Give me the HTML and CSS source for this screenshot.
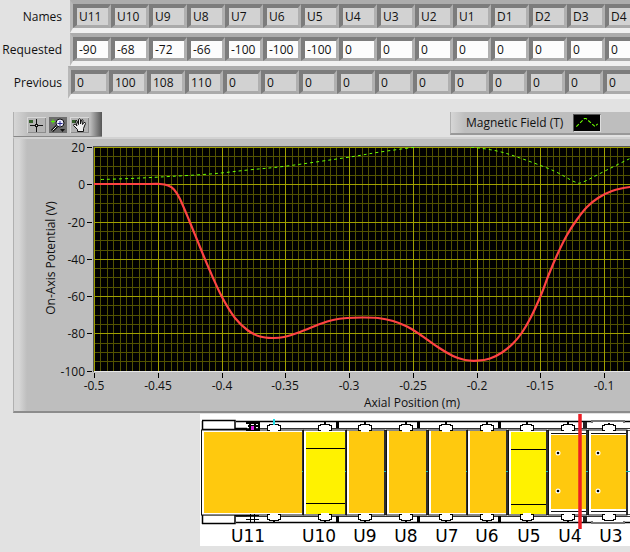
FILE: index.html
```html
<!DOCTYPE html>
<html lang="en">
<head>
<meta charset="utf-8">
<title>Electrode Potentials</title>
<link rel="stylesheet" href="styles.css">
</head>
<body>
<main class="panel">
  <section class="arrays">
    <div class="array"><label class="array-label" for="names-0">Names</label><div class="cells" id="names"></div></div>
    <div class="array"><label class="array-label" for="requested-0">Requested</label><div class="cells editable" id="requested"></div></div>
    <div class="array indicator"><label class="array-label" for="previous-0">Previous</label><div class="cells" id="previous"></div></div>
  </section>

  <section class="graph">
    <header class="graph-head">
      <div class="palette">
        <button class="tool" type="button" aria-label="Cursor">
          <svg width="19" height="16" shape-rendering="crispEdges"><path d="M2 3h4v3H2z" fill="#355f2b"/><path d="M3 8.500h13M9.500 2v13" stroke="#111"/><path d="M8 7h3v3H8z" fill="#111"/><path d="M9 8h1v1H9z" fill="#ddd"/></svg>
        </button>
        <button class="tool pressed" type="button" aria-label="Zoom">
          <svg width="18" height="16"><path d="M2 4.500h4M4 2.500v4" stroke="#55f000"/><path d="M8 9l-5 5" stroke="#111" stroke-width="3"/><path d="M7.500 9.500l-4 4" stroke="#eee"/><circle cx="11" cy="6" r="4" fill="#eef" stroke="#111"/><path d="M8.500 6.500h5M11 4v5" stroke="#24248c"/><path d="M11 12h5l-2.500 3z" fill="#111"/></svg>
        </button>
        <button class="tool" type="button" aria-label="Pan">
          <svg width="19" height="16"><path d="M2 3h4v3H2z" fill="#355f2b"/><path d="M7.500 14.500v-2L3.500 8.500q0-2 2-1l1.500 1.500L5.500 4q.5-1.500 1.500 0l1.500 3.500V2.500q1-1.500 2 0v4.500l1-4q1.500-1 1.500.5L12.500 7.500l1.500-2q1.500-.5 1.500 1l-2 5v3z" fill="#eee" stroke="#111"/></svg>
        </button>
      </div>
      <div class="legend">
        <span>Magnetic Field (T)</span>
        <svg class="swatch" width="28" height="18" viewBox="0 0 28 18"><path d="M2 13L11 4h2L23 13l3-3" fill="none" stroke="#6cff00" stroke-width="1.200" stroke-dasharray="4 2"/></svg>
      </div>
    </header>
    <div class="graph-body">
      <svg class="chart" width="640" height="272" viewBox="14 139 640 272" role="img" aria-label="On-axis potential and magnetic field against axial position">
        <defs><clipPath id="plot-area"><rect x="94" y="147" width="560" height="224"/></clipPath></defs>
        <rect x="93" y="146" width="561" height="226" fill="#555"/>
        <rect x="94" y="371" width="560" height="1" fill="#e8e8e8"/>
        <rect x="94" y="147" width="560" height="224"/>
        <g id="grid" clip-path="url(#plot-area)" shape-rendering="crispEdges"></g>
        <g clip-path="url(#plot-area)" fill="none">
          <path id="field" class="field"/>
          <path id="potential" class="potential"/>
        </g>
        <g id="ticks"></g>
        <text x="412" y="407" text-anchor="middle">Axial Position (m)</text>
        <text transform="translate(55 258) rotate(-90)" text-anchor="middle">On-Axis Potential (V)</text>
      </svg>
    </div>
  </section>

  <figure class="diagram">
    <svg width="430" height="132" viewBox="200 414 430 132" role="img" aria-label="Electrode stack cross-section">
      <g stroke="#000" fill="none">
        <path d="M236 421.500H630M236 522.500H630" stroke-width="1.500"/>
        <path d="M236 428.500H630M236 516.500H630" stroke="#333"/>
        <path d="M202 430.500H630M202 514.500H630" stroke="#555"/>
        <path d="M202.500 421v103M202 420.500h33v8h12M202 523.500h33v-8h12M202 429.500h45M202 514.500h45" stroke-width="1.500"/>
      </g>
      <g id="electrodes"></g>
      <g id="supports" shape-rendering="crispEdges"></g>
      <g>
        <path d="M246 423h14M248 426h10M246 430h13M250 421v10M255 421v10M259 423v8" stroke="#000" stroke-width="2"/>
        <path d="M251 426h3v4h-3z" fill="#e020e0"/>
        <path d="M246 515.500h13M246 519.500h13M250.500 514v9M254.500 514v9" stroke="#000" fill="none"/>
        <path d="M274 419v6" stroke="#20dce8" stroke-width="2"/>
        <path d="M592 423v-2h32v2M592 521v2h32v-2" stroke="#777" fill="#fff" stroke-width="2"/>
        <path d="M583 422h4v6h-4zM583 516h4v6h-4z" fill="#222"/>
      </g>
      <path d="M580 414v115" stroke="#ed1c24" stroke-width="3.500"/>
      <g class="names" id="electrode-names"></g>
    </svg>
  </figure>
</main>
<script src="panel.js"></script>
</body>
</html>
```
FILE: styles.css
```css
* { box-sizing: border-box; }

body {
  margin: 0;
  background: #e2e2e2;
  color: #111;
  font: 12px/16px "Open Sans", "Noto Sans", sans-serif;
  overflow: hidden;
}

.array {
  display: flex;
  align-items: center;
  gap: 8px;
  white-space: nowrap;
}

.array.indicator { gap: 6px; }

.array-label {
  flex: none;
  width: 62px;
  text-align: right;
}

.cells {
  display: flex;
  flex: none;
  border-style: solid;
  border-width: 4px 3px 5px;
  border-color: #acacac #f0f0f0 #f0f0f0 #b8b8b8;
  background: #b2b2b2;
}

.cell {
  width: 38px;
  height: 24px;
  padding: 0 2px;
  border-style: solid;
  border-width: 4px 3px 3px 4px;
  border-color: #7c7c7c #b0b0b0 #aaa #7c7c7c;
  border-radius: 0;
  background: #d2d2d2;
  color: #111;
  font: inherit;
  outline: 0;
}

.editable .cell { background: #fcfcfc; }

.graph { margin: 13px 0 0 13px; }

.graph-head {
  display: flex;
  align-items: flex-start;
  justify-content: space-between;
}

.palette {
  display: flex;
  align-items: flex-start;
  gap: 3px;
  height: 25px;
  padding: 5px 13px 0;
  border-left: 1px solid #b0b0b0;
  border-bottom: 1px solid #888;
  background: linear-gradient(90deg, #d6d6d6, #bebebe 14px, #bebebe 76px, #555);
}

.tool {
  width: 19px;
  height: 16px;
  padding: 0;
  border: 0;
  background: #b4b4b4;
  box-shadow: inset 1px 1px #d8d8d8, inset -1px -1px #8c8c8c;
}

.tool.pressed {
  width: 18px;
  background: #6e6e6e;
  box-shadow: none;
}

.tool svg { display: block; }

.legend {
  display: flex;
  align-items: center;
  gap: 10px;
  width: 180px;
  height: 23px;
  padding-left: 15px;
  border-left: 1px solid #b0b0b0;
  border-bottom: 2px solid #999;
  background: linear-gradient(90deg, #d6d6d6, #bebebe 14px);
  white-space: nowrap;
}

.swatch {
  border: 1px solid #ddd;
  border-top-color: #555;
  border-left-color: #555;
  background: #000;
}

.graph-body {
  overflow: hidden;
  border-top: 2px solid #d2d2d2;
  border-left: 1px solid #b0b0b0;
  border-bottom: 2px solid #8c8c8c;
  background: linear-gradient(90deg, #d6d6d6 5px, #bebebe 13px);
}

.chart { display: block; }
.chart text { fill: #111; }
.field { stroke: #6cff00; stroke-dasharray: 3 3; }
.potential { stroke: #ff4343; stroke-width: 2.2; }

.diagram {
  margin: 1px 0 0 200px;
  overflow: hidden;
  background: #fff;
}

.diagram svg { display: block; }
.names { font: 17px "DejaVu Sans", sans-serif; }
```
FILE: panel.js
```js
const names = ["U11", "U10", "U9", "U8", "U7", "U6", "U5", "U4", "U3", "U2", "U1", "D1", "D2", "D3", "D4"];
const requested = [-90, -68, -72, -66, -100, -100, -100, 0, 0, 0, 0, 0, 0, 0, 0];
const previous = [0, 100, 108, 110, 0, 0, 0, 0, 0, 0, 0, 0, 0, 0, 0];

const el = id => document.getElementById(id);

function fillCells(id, values, editable) {
  el(id).innerHTML = values.map((v, i) =>
    `<input class="cell" id="${id}-${i}" aria-label="${id} ${names[i]}" value="${v}"${editable ? "" : " readonly"}>`).join("");
}
fillCells("names", names, false);
fillCells("requested", requested, true);
fillCells("previous", previous, false);

// Axes: 50 mm per major division across, 20 V down.
let grid = "", major = "", ticks = "";
for (let i = 0; i <= 88; i++) {
  const x = Math.floor(94.5 + i * 6.375);
  const line = `<rect x="${x}" y="147" width="1" height="224" fill="${i % 10 ? "#525200" : "#a0a000"}"/>`;
  if (i % 10) grid += line; else {
    major += line;
    const label = String(+(-0.5 + i * 0.005).toFixed(2));
    ticks += `<rect x="${x}" y="373" width="1" height="5"/><text x="${x}" y="390" text-anchor="middle">${label}</text>`;
  }
}
for (let i = 0; i <= 24; i++) {
  const y = Math.round(147 + i * 9.32);
  const line = `<rect x="94" y="${y}" width="560" height="1" fill="${i % 4 ? "#525200" : "#a0a000"}"/>`;
  if (i % 4) grid += line; else {
    major += line;
    ticks += `<rect x="87" y="${y}" width="5" height="1"/><text x="85" y="${y + 5}" text-anchor="end">${20 - i * 5}</text>`;
  }
}
el("grid").innerHTML = grid + major;
el("ticks").innerHTML = ticks;

// Catmull-Rom spline through the sample points.
function spline(p) {
  let d = `M${p[0]}`;
  for (let i = 0; i < p.length - 1; i++) {
    const a = p[i - 1] || p[i], b = p[i], c = p[i + 1], e = p[i + 2] || c;
    d += `C${b[0] + (c[0] - a[0]) / 6},${b[1] + (c[1] - a[1]) / 6} ${c[0] - (e[0] - b[0]) / 6},${c[1] - (e[1] - b[1]) / 6} ${c}`;
  }
  return d;
}
el("potential").setAttribute("d", spline([[94, 184], [120, 184], [150, 184], [160, 184], [168, 185.5], [174, 189.5], [180, 199], [190, 222.5], [200, 247], [210, 271], [222, 297], [235, 318], [248, 330.5], [260, 336.5], [272, 338], [284, 337], [300, 332], [320, 324], [333, 320], [347, 318], [362, 317.5], [378, 318], [393, 321], [407, 326.5], [420, 334.5], [437, 346.5], [453, 356], [465, 360], [477, 360.7], [490, 358.5], [502, 352.5], [513, 343.5], [522, 332.5], [531, 317], [541, 295], [549, 274], [558, 253], [567, 235], [577, 219.5], [587, 207], [598, 198], [612, 191], [630, 187], [654, 185]]));
el("field").setAttribute("d", spline([[101, 179.5], [130, 178.5], [160, 177], [210, 174], [248, 170], [287, 166], [350, 157], [377, 152.5], [413, 147.5], [440, 145], [470, 147], [497, 151], [520, 158], [553, 170.5], [575, 182], [583, 182], [602, 172.5], [630, 158.5], [654, 148]]));

// Electrodes: name, left, right, top, bottom, support centre, name position.
const stack = [
  ["U11", 204, 302, 432, 513, 274, 248],
  ["U10", 306, 345, 432, 514, 325, 319],
  ["U9", 349, 384, 431, 513, 365, 365],
  ["U8", 389, 426, 431, 513, 406, 406],
  ["U7", 431, 466, 431, 513, 446, 447],
  ["U6", 470, 506, 431, 513, 487, 487],
  ["U5", 511, 546, 432, 514, 527, 529],
  ["U4", 551, 586, 435, 509, 568, 570],
  ["U3", 591, 626, 435, 509, 609, 611]
];
let bodies = "", supports = "", labels = "";
for (const [name, x1, x2, top, bottom, cx, tx] of stack) {
  const yellow = name === "U10" || name === "U5";
  const holes = name === "U4" || name === "U3";
  bodies += `<rect x="${x1 - 2.5}" y="430" width="${x2 - x1 + 3.5}" height="85" fill="#fff" stroke="#111"/>`;
  bodies += `<path d="M${x2 + 1} 430V515" stroke="#111" stroke-width="1.5"/>`;
  bodies += `<rect x="${x1}" y="${top}" width="${x2 - x1}" height="${bottom - top}" fill="${yellow ? "#fff200" : "#ffc90e"}"/>`;
  bodies += `<path d="M${x2} 471.5h4" stroke="#20b8b8"/>`;
  if (yellow) {
    const y = name === "U5" ? 449.5 : 448.5;
    bodies += `<path d="M${x1} ${y}H${x2}M${x1} ${y + 55}H${x2}" stroke="#000"/>`;
  }
  if (holes) {
    bodies += `<path d="M${x1} 433.5H${x2}M${x1} 511.5H${x2}" stroke="#111"/>`;
    for (const y of [453, 491]) bodies += `<circle cx="${x1 + 7}" cy="${y}" r="2.5" fill="#fff"/><circle cx="${x1 + 7}" cy="${y}" r="1.3"/>`;
  }
  // Stepped bracket over each rail: black silhouette with a white inset.
  supports += `<path d="M${cx - 5} 424h10v1h2v6h-14v-6h2zM${cx - 5} 521h10v-1h2v-6h-14v6h2z"/>`;
  supports += `<path d="M${cx - 4} 425h8v1h2v4h-2v2h-8v-2h-2v-4h2zM${cx - 4} 520h8v-1h2v-4h-2v-2h-8v2h-2v4h2z" fill="#fff"/>`;
  supports += `<path d="M${cx - 1} 422h2v2h-2zM${cx - 1} 521h2v2h-2z"/>`;
  labels += `<text x="${tx}" y="542" text-anchor="middle">${name}</text>`;
}
for (const x of [337, 418, 499]) supports += `<path d="M${x - 1} 421h3v7h-3zM${x - 1} 516h3v7h-3z"/>`;
el("electrodes").innerHTML = bodies;
el("supports").innerHTML = supports;
el("electrode-names").innerHTML = labels;
```
